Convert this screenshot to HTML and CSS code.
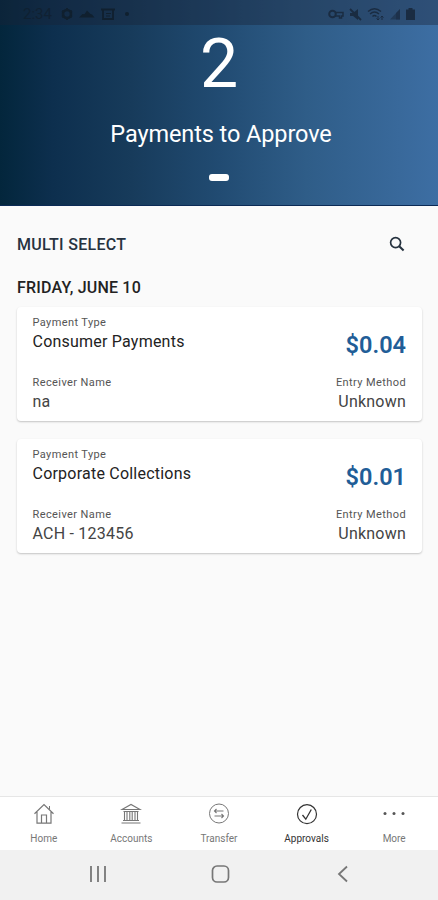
FILE: index.html
```
<!DOCTYPE html>
<html lang="en">
<head>
    <meta charset="UTF-8">
    <meta name="viewport" content="width=device-width, initial-scale=1.0">
    <title>Payments to Approve</title>
    <link rel="stylesheet" href="styles.css">
</head>
<body>
    <div class="screen">
        <header class="hero">
            <div class="status-bar">
                <div class="status-left">
                    <span class="clock">2:34</span>
                    <svg width="12" height="12" viewBox="0 0 12 12"><circle cx="6" cy="6" r="4" fill="none" stroke="currentColor" stroke-width="2.6"/><path d="M6 0v2M6 10v2M1 3l2 1M9 8l2 1M1 9l2-1M9 4l2-1" stroke="currentColor" stroke-width="2"/></svg>
                    <svg width="16" height="12" viewBox="0 0 16 12"><path d="M0 9.500L3.500 6l2 .3L8 2.500l3.500 3.500 1.500 .500L15.500 9.500z" fill="currentColor"/></svg>
                    <svg width="14" height="12" viewBox="0 0 14 12"><path d="M0 1.500h14M2 2v9h10V2" fill="none" stroke="currentColor" stroke-width="1.800"/><path d="M5 5.500h5M5 8h4" stroke="currentColor" stroke-width="1.200"/></svg>
                    <span class="status-dot"></span>
                </div>
                <div class="status-right">
                    <svg width="16" height="12" viewBox="0 0 16 12"><circle cx="4.500" cy="6" r="3.300" fill="none" stroke="currentColor" stroke-width="2"/><path d="M7 4.500h8v3.500h-1.500v2h-2V8H7" fill="none" stroke="currentColor" stroke-width="1.500"/></svg>
                    <svg width="13" height="13" viewBox="0 0 13 13"><path d="M1 5h3l5-4v11L4 8H1z" fill="currentColor"/><path d="M1 1l11 11" stroke="currentColor" stroke-width="1.800"/></svg>
                    <svg width="17" height="14" viewBox="0 0 17 14"><path d="M1 4.500q6.500-5.500 13 0M3 7q4.500-4 9 0M5.500 9.500q2-2 4 0" fill="none" stroke="currentColor" stroke-width="1.400"/><path d="M11 9v4M9.500 11.500L11 13l1.500-1.500M15 13V9M13.500 10.500L15 9l1.500 1.500" fill="none" stroke="currentColor"/></svg>
                    <svg width="12" height="12" viewBox="0 0 12 12"><path d="M1 11.500L11 1v10.500z" fill="currentColor" opacity=".55"/><path d="M7 11.500V5l4-4v10.500z" fill="currentColor" opacity=".6"/></svg>
                    <svg width="9" height="12" viewBox="0 0 9 12"><path d="M0 1.500h2.500V0h4v1.500H9V12H0z" fill="currentColor"/></svg>
                </div>
            </div>
            <div class="hero-count">2</div>
            <div class="hero-title">Payments to Approve</div>
            <div class="hero-indicator"></div>
        </header>

        <main class="content">
            <div class="toolbar">
                <span class="multi-select">MULTI SELECT</span>
                <svg class="search-icon" width="16" height="16" viewBox="0 0 16 16"><circle cx="6.600" cy="6.600" r="5" fill="none" stroke="currentColor" stroke-width="1.700"/><path d="M10.200 10.200L14.600 14.400" stroke="currentColor" stroke-width="2.100"/></svg>
            </div>
            <h2 class="date-heading">FRIDAY, JUNE 10</h2>

            <div class="card">
                <div class="card-row">
                    <div>
                        <div class="label">Payment Type</div>
                        <div class="value strong">Consumer Payments</div>
                    </div>
                    <div class="amount">$0.04</div>
                </div>
                <div class="card-row">
                    <div>
                        <div class="label">Receiver Name</div>
                        <div class="value">na</div>
                    </div>
                    <div class="right">
                        <div class="label">Entry Method</div>
                        <div class="value">Unknown</div>
                    </div>
                </div>
            </div>

            <div class="card">
                <div class="card-row">
                    <div>
                        <div class="label">Payment Type</div>
                        <div class="value strong">Corporate Collections</div>
                    </div>
                    <div class="amount">$0.01</div>
                </div>
                <div class="card-row">
                    <div>
                        <div class="label">Receiver Name</div>
                        <div class="value">ACH - 123456</div>
                    </div>
                    <div class="right">
                        <div class="label">Entry Method</div>
                        <div class="value">Unknown</div>
                    </div>
                </div>
            </div>
        </main>

        <nav class="tab-bar">
            <a class="tab">
                <svg width="22" height="22" viewBox="0 0 22 22"><path d="M1.500 10.800L11 1.500l9.500 9.300M4 9v11.200h14V9M8.500 20v-8h5v8" fill="none" stroke="currentColor" stroke-width="1.200"/><path d="M16.500 6.500V3" fill="none" stroke="currentColor"/></svg>
                <span>Home</span>
            </a>
            <a class="tab">
                <svg width="22" height="22" viewBox="0 0 22 22"><path d="M2 6.500L11 1.500l9 5zM3.500 8.500h15M4.500 8.500v9M7 8.500v9M9.800 8.500v9M12.200 8.500v9M15 8.500v9M17.500 8.500v9M3 17.500h16M1.500 20h19" fill="none" stroke="currentColor" stroke-width="1.100"/></svg>
                <span>Accounts</span>
            </a>
            <a class="tab">
                <svg width="22" height="22" viewBox="0 0 22 22"><circle cx="11" cy="10.500" r="9.500" fill="none" stroke="currentColor"/><path d="M15.500 8H6.500M8.500 6L6.500 8l2 2M6.500 13h9M13.500 11l2 2-2 2" fill="none" stroke="currentColor" stroke-width="1.100"/></svg>
                <span>Transfer</span>
            </a>
            <a class="tab active">
                <svg width="22" height="22" viewBox="0 0 22 22"><circle cx="11" cy="11.200" r="9.500" fill="none" stroke="currentColor" stroke-width="1.200"/><path d="M6.500 12l3.300 4.200L15.300 6.500" fill="none" stroke="currentColor" stroke-width="1.300"/></svg>
                <span>Approvals</span>
            </a>
            <a class="tab">
                <svg width="24" height="22" viewBox="0 0 24 22"><g fill="#555"><circle cx="3" cy="10.500" r="1.500"/><circle cx="12" cy="10.500" r="1.500"/><circle cx="21" cy="10.500" r="1.500"/></g></svg>
                <span>More</span>
            </a>
        </nav>

        <div class="system-nav">
            <svg width="20" height="20" viewBox="0 0 20 20"><path d="M3 2v16M10 2v16M17 2v16" stroke="currentColor" stroke-width="1.800"/></svg>
            <svg width="20" height="20" viewBox="0 0 20 20"><rect x="1.500" y="2" width="16" height="16" rx="4.500" fill="none" stroke="currentColor" stroke-width="1.700"/></svg>
            <svg width="20" height="20" viewBox="0 0 20 20"><path d="M14 2.500L6 10l8 7.500" fill="none" stroke="currentColor" stroke-width="1.800"/></svg>
        </div>
    </div>
</body>
</html>
```
FILE: styles.css
```
* {
    box-sizing: border-box;
}
body {
    margin: 0;
    font-family: Roboto, sans-serif;
    background-color: #fafafa;
    color: #333;
}
.screen {
    display: flex;
    flex-direction: column;
    height: 900px;
}
.hero {
    height: 206px;
    background: linear-gradient(90deg, #03263c 0%, #0d2f4e 12%, #173b5b 30%, #214b72 50%, #2f5d88 70%, #3d6ea3 100%);
    border-bottom: 1px solid #0b2a55;
    color: #fff;
    display: flex;
    flex-direction: column;
    align-items: center;
}
.status-bar {
    width: 100%;
    height: 25px;
    padding: 3px 23px 0 23px;
    background-color: rgba(24, 36, 56, 0.4);
    color: #10202f;
    display: flex;
    justify-content: space-between;
    align-items: center;
}
.status-left,
.status-right {
    display: flex;
    align-items: center;
}
.status-left {
    gap: 6px;
}
.status-right {
    gap: 5px;
    color: #1a2c42;
}
.clock {
    font-size: 15px;
    width: 32px;
    opacity: 0.8;
}
.status-dot {
    width: 4px;
    height: 4px;
    margin-left: 4px;
    border-radius: 50%;
    background-color: currentColor;
}
.hero-count {
    margin-top: -1px;
    font-size: 68px;
    line-height: 80px;
    height: 80px;
}
.hero-title {
    margin-top: 16px;
    padding-left: 4px;
    font-size: 23.5px;
    line-height: 28px;
    letter-spacing: -0.1px;
}
.hero-indicator {
    width: 20px;
    height: 7px;
    margin-top: 26px;
    border-radius: 3px;
    background-color: #fff;
}
.content {
    flex: 1;
    padding: 28px 16px 0 17px;
}
.toolbar {
    display: flex;
    justify-content: space-between;
    align-items: center;
    height: 20px;
    padding-right: 17px;
    color: #26323f;
}
.multi-select {
    font-size: 16px;
    font-weight: 500;
    letter-spacing: 0.3px;
}
.date-heading {
    margin: 24px 0 9px;
    font-size: 16px;
    line-height: 20px;
    font-weight: 500;
    letter-spacing: 0.2px;
    color: #222;
}
.card {
    height: 114px;
    margin-bottom: 18px;
    padding: 9px 16px 0 15.5px;
    border-radius: 4px;
    background-color: #fff;
    box-shadow: 0 1px 2px rgba(0, 0, 0, 0.22);
}
.card-row {
    display: flex;
    justify-content: space-between;
    height: 60px;
}
.label {
    font-size: 11px;
    line-height: 14px;
    letter-spacing: 0.4px;
    color: #555;
}
.value {
    font-size: 16px;
    line-height: 23px;
    letter-spacing: 0.22px;
    color: #444;
}
.value.strong {
    color: #222;
}
.right {
    text-align: right;
}
.amount {
    padding-top: 15px;
    font-size: 23.5px;
    line-height: 28px;
    font-weight: 600;
    color: #215d97;
}
.tab-bar {
    height: 54px;
    padding-top: 6px;
    border-top: 1px solid #e6e6e6;
    background-color: #fff;
    display: flex;
}
.tab {
    flex: 1;
    display: flex;
    flex-direction: column;
    align-items: center;
    gap: 8px;
    font-size: 10px;
    line-height: 12px;
    color: #777;
}
.tab.active {
    color: #333;
}
.system-nav {
    height: 50px;
    padding: 0 85px 2px 88px;
    background-color: #f1f1f1;
    color: #777;
    display: flex;
    justify-content: space-between;
    align-items: center;
}
```
